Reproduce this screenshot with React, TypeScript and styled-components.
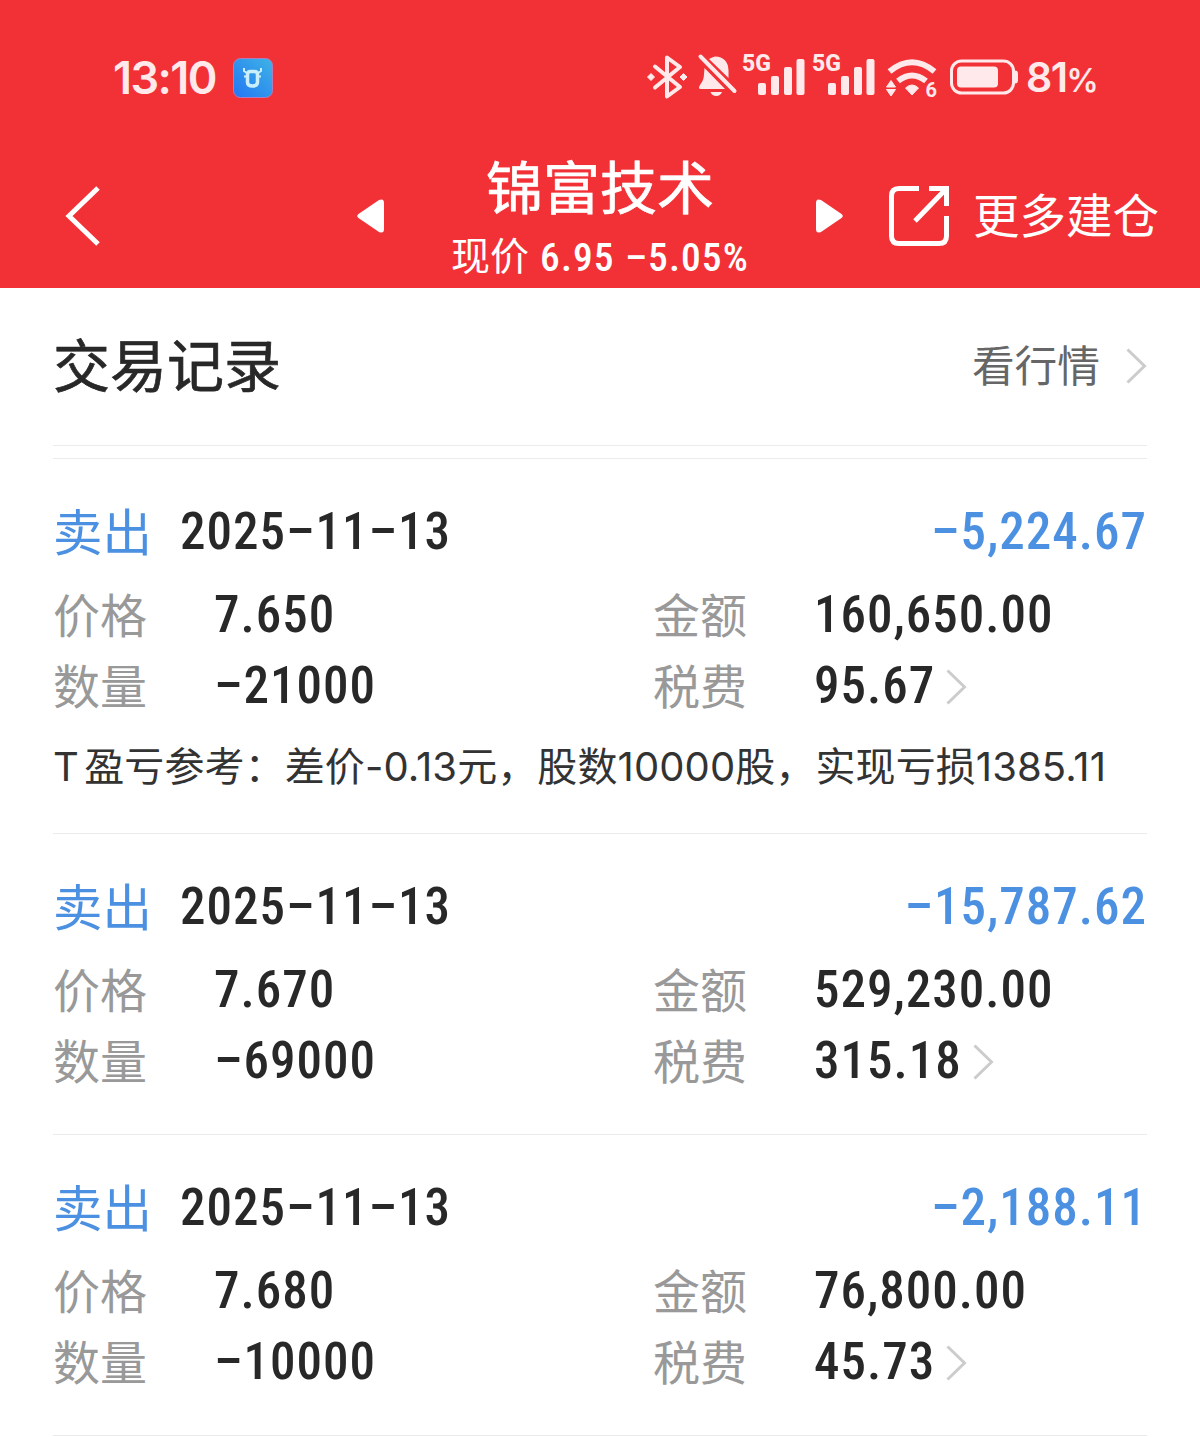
import React from "react";
import styled, { createGlobalStyle } from "styled-components";

const GlobalStyle = createGlobalStyle`
  * { box-sizing: border-box; }
  body { margin: 0; background: #fff; }
`;

const cjk = `"Noto Sans CJK SC", sans-serif`;
const digits = `Roboto, "Noto Sans CJK SC", sans-serif`;
const system = `Inter, "Noto Sans CJK SC", sans-serif`;

const Page = styled.div`
  width: 1200px;
  height: 1437px;
  overflow: hidden;
  background: #fff;
  color: #282828;
  font-family: ${cjk};
  white-space: nowrap;
`;

const Header = styled.header`
  height: 288px;
  background: #f23136;
  color: #fff;
`;

const StatusBar = styled.div`
  display: flex;
  align-items: center;
  height: 144px;
  padding: 11px 103px 0 113px;
  color: #ffe9ea;
  font-family: ${system};
`;

const Clock = styled.span`
  width: 121px;
  font-size: 45px;
  font-weight: 600;
  letter-spacing: -1.6px;
`;

const StatusIcons = styled.svg`
  display: block;
  margin-left: 373px;
  flex: none;
`;

const Battery = styled.span`
  margin-left: 8px;
  padding-bottom: 2px;
  font-size: 41px;
  font-weight: 600;
  letter-spacing: -1.6px;
`;

const Percent = styled.small`
  font-size: 32px;
`;

const NavBar = styled.nav`
  display: flex;
  align-items: center;
  height: 144px;
`;

const BackButton = styled.div`
  width: 357px;
  padding-left: 62px;
`;

const Icon = styled.svg`
  display: block;
  flex: none;
`;

const Heading = styled.div`
  display: flex;
  flex-direction: column;
  align-items: center;
  width: 432px;
  height: 144px;
  padding-top: 8px;
`;

const StockName = styled.h1`
  margin: 0;
  height: 73px;
  line-height: 64px;
  font-size: 57px;
  font-weight: 400;
  -webkit-text-stroke: 0.7px currentColor;
`;

const Quote = styled.div`
  display: flex;
  align-items: center;
  gap: 11px;
  height: 62px;
  font-size: 39px;
`;

const QuoteLabel = styled.span`
  padding-bottom: 5px;
  line-height: 57px;
`;

const QuoteValue = styled.span`
  padding-top: 3px;
  font-family: ${digits};
  font-weight: 500;
  font-stretch: 75%;
  font-size: 39.5px;
  letter-spacing: 1.1px;
`;

const MoreLink = styled.div`
  display: flex;
  align-items: center;
  gap: 23px;
  margin-left: 45px;
  font-size: 46.5px;
  line-height: 60px;
`;

const LinkText = styled.span`
  padding-bottom: 6px;
`;

const Content = styled.main`
  padding: 0 53px;
`;

const SectionHead = styled.div`
  display: flex;
  align-items: center;
  justify-content: space-between;
  height: 158px;
  padding-bottom: 2px;
  margin-bottom: 12px;
  border-bottom: 1px solid #ebebeb;
`;

const SectionTitle = styled.h2`
  margin: 0;
  padding-bottom: 8px;
  font-size: 57px;
  font-weight: 400;
  line-height: 64px;
  -webkit-text-stroke: 0.7px currentColor;
`;

const MarketLink = styled.div`
  display: flex;
  align-items: center;
  gap: 26px;
  color: #666;
  font-size: 42.7px;
  line-height: 60px;
`;

const Record = styled.section<{ $hasNote: boolean }>`
  padding: 25px 0 ${(p) => (p.$hasNote ? 20 : 38)}px;
  border-top: 1px solid #ebebeb;
`;

const RecordHead = styled.div`
  display: flex;
  align-items: center;
  height: 95px;
`;

const Side = styled.span`
  width: 127px;
  padding-bottom: 4px;
  color: #4c90e2;
  font-size: 49.5px;
  line-height: 60px;
`;

const Num = styled.span`
  font-family: ${digits};
  font-size: 51px;
  font-weight: 500;
  font-stretch: 75%;
  line-height: 60px;
  letter-spacing: 1px;
`;

const Profit = styled(Num)`
  margin-left: auto;
  color: #4c90e2;
`;

const Fields = styled.div`
  display: grid;
  grid-template-columns: 600px 1fr;
  grid-auto-rows: 71px;
`;

const Field = styled.div`
  display: flex;
  align-items: center;
`;

const Label = styled.span`
  width: 161px;
  padding-bottom: 4px;
  color: #999;
  font-size: 47px;
  line-height: 60px;
`;

const FeeArrow = styled(Icon)`
  margin: 3px 0 0 11px;
`;

const Note = styled.p`
  display: flex;
  align-items: center;
  height: 92px;
  margin: 0;
  padding-bottom: 6px;
  color: #333;
  font-family: ${system};
  font-size: 40px;
  letter-spacing: 0.1px;
  word-spacing: -6px;
`;

const Chevron = ({ as: Comp = Icon }: { as?: React.ElementType }) => (
  <Comp width="21" height="36" viewBox="0 0 21 36" fill="none">
    <path d="M1.5 1.5 18.5 18 1.5 34.5" stroke="#ccc" strokeWidth="3" />
  </Comp>
);

const StatusGlyphs = () => (
  <StatusIcons width="372" height="60" viewBox="646 48 372 60" fill="none">
    <g stroke="#ffe9ea" strokeWidth="4" strokeLinejoin="round" strokeLinecap="round">
      <path d="M655 66.5 680 87 667 96.500V57.500L680 67 655 87.500" />
      <path d="M700.500 56.500 734.500 91" />
    </g>
    <g fill="#ffe9ea">
      <path d="m651 73.500 3.500 3.500-3.500 3.500-3.500-3.500zM683.500 73.500l3.500 3.500-3.500 3.500-3.500-3.500z" stroke="#ffe9ea" strokeLinejoin="round" />
      <path d="M704.500 68 725 89H700q-2-1 0-4 4-5 4-11zM709 59q3-2 6-2.500 13 .5 13.500 14V78zM710.500 92h11.500q-1.500 4-5.800 4t-5.700-4z" />
      <text x="742" y="71" fontFamily="Roboto, sans-serif" fontSize="23" fontWeight="800">5G</text>
      <text x="812" y="71" fontFamily="Roboto, sans-serif" fontSize="23" fontWeight="800">5G</text>
      {[758, 828].map((x) => (
        <g key={x}>
          <rect x={x} y="83" width="8" height="12" rx="2" />
          <rect x={x + 13} y="76" width="8" height="19" rx="2" />
          <rect x={x + 26} y="67" width="8" height="28" rx="2" />
          <rect x={x + 38.500} y="59" width="8" height="36" rx="2" />
        </g>
      ))}
      <path d="m912 95-6.500-7q6.500-6 13 0zM891 80.500l4.500 6.500h-9zM891 96l-4.500-6.500h9z" stroke="#ffe9ea" strokeLinejoin="round" />
      <text x="925.500" y="97" fontFamily="Roboto, sans-serif" fontSize="20" fontWeight="700">6</text>
      <rect x="957" y="66.500" width="41" height="21" rx="4" />
      <path d="M1014 70.500h1q3 0 3 3v7q0 3-3 3h-1z" />
    </g>
    <path d="M889.500 71.500Q912 53 934.500 71.500M898 81Q912 70 926 81" stroke="#ffe9ea" strokeWidth="6" />
    <rect x="951.500" y="61" width="62" height="32" rx="10" stroke="#ffe9ea" strokeWidth="3" />
  </StatusIcons>
);

const AppBadge = () => (
  <Icon width="40" height="40" viewBox="0 0 40 40">
    <defs>
      <linearGradient id="badge" x1="0" y1="1" x2="1" y2="0">
        <stop offset="0" stopColor="#2375f3" />
        <stop offset="1" stopColor="#3eb4e5" />
      </linearGradient>
    </defs>
    <rect x=".5" y=".5" width="39" height="39" rx="7" fill="url(#badge)" stroke="#ad7dbd" />
    <g fill="none" stroke="#c9effb">
      <path d="M17.500 13.500h4q3 0 3 3V24q0 4-5 4t-5-4v-7.500q0-3 3-3z" strokeWidth="3.500" />
      <path d="m14 15-3-2V10M25 15l3-2V10M13 18.500h-2M26 18.500h2" strokeWidth="2" />
    </g>
  </Icon>
);

interface Trade {
  side: string;
  date: string;
  profit: string;
  price: string;
  amount: string;
  quantity: string;
  fee: string;
  note?: string;
}

const trades: Trade[] = [
  {
    side: "卖出", date: "2025–11–13", profit: "–5,224.67",
    price: "7.650", amount: "160,650.00", quantity: "–21000", fee: "95.67",
    note: "T 盈亏参考：差价-0.13元，股数10000股，实现亏损1385.11",
  },
  {
    side: "卖出", date: "2025–11–13", profit: "–15,787.62",
    price: "7.670", amount: "529,230.00", quantity: "–69000", fee: "315.18",
  },
  {
    side: "卖出", date: "2025–11–13", profit: "–2,188.11",
    price: "7.680", amount: "76,800.00", quantity: "–10000", fee: "45.73",
  },
];

const TradeRecord = ({ trade }: { trade: Trade }) => (
  <Record $hasNote={Boolean(trade.note)}>
    <RecordHead>
      <Side>{trade.side}</Side>
      <Num>{trade.date}</Num>
      <Profit>{trade.profit}</Profit>
    </RecordHead>
    <Fields>
      <Field><Label>价格</Label><Num>{trade.price}</Num></Field>
      <Field><Label>金额</Label><Num>{trade.amount}</Num></Field>
      <Field><Label>数量</Label><Num>{trade.quantity}</Num></Field>
      <Field><Label>税费</Label><Num>{trade.fee}</Num><Chevron as={FeeArrow} /></Field>
    </Fields>
    {trade.note && <Note>{trade.note}</Note>}
  </Record>
);

export default function App() {
  return (
    <Page>
      <GlobalStyle />
      <Header>
        <StatusBar>
          <Clock>13:10</Clock>
          <AppBadge />
          <StatusGlyphs />
          <Battery>81<Percent>%</Percent></Battery>
        </StatusBar>
        <NavBar>
          <BackButton>
            <Icon width="40" height="64" viewBox="0 0 40 64" fill="none">
              <path d="M36 4 7 32 36 60" stroke="#fff" strokeWidth="5" />
            </Icon>
          </BackButton>
          <Icon width="27" height="34" viewBox="0 0 27 34" fill="#fff">
            <path d="M22 1Q27-1 27 4V30Q27 35 22 33L1.500 19Q-1 17 1.500 15z" />
          </Icon>
          <Heading>
            <StockName>锦富技术</StockName>
            <Quote><QuoteLabel>现价</QuoteLabel><QuoteValue>6.95 –5.05%</QuoteValue></Quote>
          </Heading>
          <Icon width="27" height="34" viewBox="0 0 27 34" fill="#fff">
            <path d="M5 1Q0-1 0 4V30Q0 35 5 33L25.500 19Q28 17 25.500 15z" />
          </Icon>
          <MoreLink>
            <Icon width="62" height="62" viewBox="0 0 62 62" fill="none" stroke="#fff" strokeWidth="5">
              <path d="M31 3.500H11Q3.500 3.500 3.500 11V51Q3.500 58.500 11 58.500H51Q58.500 58.500 58.500 51V31" />
              <path d="M41 3.500H58.500V21M57 5 27 36" />
            </Icon>
            <LinkText>更多建仓</LinkText>
          </MoreLink>
        </NavBar>
      </Header>
      <Content>
        <SectionHead>
          <SectionTitle>交易记录</SectionTitle>
          <MarketLink><LinkText>看行情</LinkText><Chevron /></MarketLink>
        </SectionHead>
        {trades.map((trade) => (
          <TradeRecord key={trade.profit} trade={trade} />
        ))}
        <Record $hasNote={false} />
      </Content>
    </Page>
  );
}
